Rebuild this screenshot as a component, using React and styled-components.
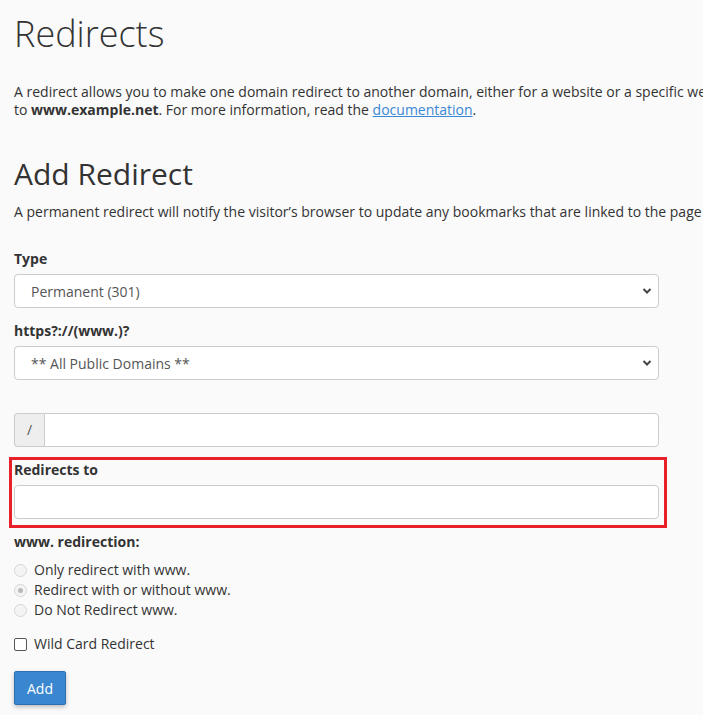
import styled, { createGlobalStyle } from "styled-components";

const GlobalStyle = createGlobalStyle`
  html, body {
    margin: 0;
    padding: 0;
    overflow: hidden;
    background: #fafafa;
  }
  body {
    font-family: "Open Sans", "Liberation Sans", sans-serif;
    font-size: 14px;
    line-height: 20px;
    color: #333;
  }
`;

const Page = styled.div`
  padding: 0 14px;
  width: 645px;
`;

const Title = styled.h1`
  margin: 12px 0 0;
  font-size: 36px;
  font-weight: 300;
  line-height: 44px;
`;

const Intro = styled.p`
  margin: 27px 0 0;
  white-space: nowrap;
  font-size: 14px;
  line-height: 18px;

  a {
    color: #3a87d4;
  }
`;

const SubTitle = styled.h2`
  margin: 36px 0 9px;
  font-size: 30px;
  font-weight: 400;
  line-height: 38px;
`;

const Lead = styled.p`
  margin: 0;
  white-space: nowrap;
  line-height: 20px;
`;

const Form = styled.form`
  margin-top: 27px;
`;

const Group = styled.div`
  position: relative;
  margin-bottom: ${(p) => p.$gap || 13}px;
`;

const Label = styled.label`
  display: block;
  font-weight: 700;
  margin-bottom: 5px;
`;

const SelectWrap = styled.div`
  position: relative;

  svg {
    position: absolute;
    right: 7px;
    top: 13px;
    pointer-events: none;
  }
`;

const Select = styled.select`
  appearance: none;
  width: 100%;
  height: 34px;
  box-sizing: border-box;
  padding: 0 16px;
  border: 1px solid #ccc;
  border-radius: 4px;
  background: #fff;
  font-family: inherit;
  font-size: 14px;
  color: #555;
`;

const Input = styled.input`
  display: block;
  width: 100%;
  height: 34px;
  box-sizing: border-box;
  padding: 6px 12px;
  border: 1px solid #ccc;
  border-radius: ${(p) => (p.$joined ? "0 4px 4px 0" : "4px")};
  background: #fff;
  font-family: inherit;
  font-size: 14px;
  color: #555;
  outline: none;
`;

const InputGroup = styled.div`
  display: flex;
`;

const Addon = styled.span`
  flex: 0 0 auto;
  width: 30px;
  height: 34px;
  box-sizing: border-box;
  display: flex;
  align-items: center;
  justify-content: center;
  background: #eee;
  border: 1px solid #ccc;
  border-right: none;
  border-radius: 4px 0 0 4px;
  color: #555;
  font-size: 14px;
`;

const Highlight = styled.div`
  position: absolute;
  left: -5px;
  right: -8px;
  top: -3px;
  bottom: -9px;
  border: 3px solid #e8202a;
  pointer-events: none;
`;

const RadioList = styled.div`
  margin-top: 8px;
`;

const Option = styled.label`
  display: flex;
  align-items: center;
  gap: 7px;
  height: 20px;
  color: #333;
`;

const Radio = styled.span`
  width: 11px;
  height: 11px;
  border-radius: 50%;
  border: 1px solid #d6d6d6;
  background: #f4f4f4;
  display: flex;
  align-items: center;
  justify-content: center;

  &::after {
    content: "";
    width: 5px;
    height: 5px;
    border-radius: 50%;
    background: ${(p) => (p.$checked ? "#b8b8b8" : "transparent")};
  }
`;

const Check = styled.span`
  width: 11px;
  height: 11px;
  border: 1px solid #555;
  border-radius: 2px;
  background: #fff;
`;

const CheckRow = styled(Option)`
  margin-top: 14px;
`;

const Button = styled.button`
  margin-top: 17px;
  width: 52px;
  height: 34px;
  border: 1px solid #2c6fb3;
  border-radius: 2px;
  background: #3a87d0;
  color: #fff;
  font-family: inherit;
  font-size: 14px;
  box-shadow: 0 2px 4px rgba(0, 0, 0, 0.25);
  cursor: pointer;
`;

function Chevron() {
  return (
    <svg width="10" height="8" viewBox="0 0 10 8">
      <path d="M1.5 2 L5 5.5 L8.5 2" fill="none" stroke="#444" strokeWidth="2" />
    </svg>
  );
}

export default function App() {
  return (
    <>
      <GlobalStyle />
      <Page>
        <Title>Redirects</Title>
        <Intro>
          A redirect allows you to make one domain redirect to another domain, either for a website or a specific web page. For example, create a redirect so that www.example.com automatically redirects users
          <br />
          to <b>www.example.net</b>. For more information, read the <a href="#doc">documentation</a>.
        </Intro>

        <SubTitle>Add Redirect</SubTitle>
        <Lead>
          A permanent redirect will notify the visitor’s browser to update any bookmarks that are linked to the page that is being redirected.
        </Lead>

        <Form onSubmit={(e) => e.preventDefault()}>
          <Group>
            <Label htmlFor="type">Type</Label>
            <SelectWrap>
              <Select id="type" defaultValue="301">
                <option value="301">Permanent (301)</option>
                <option value="302">Temporary (302)</option>
              </Select>
              <Chevron />
            </SelectWrap>
          </Group>

          <Group $gap={33}>
            <Label htmlFor="domain">https?://(www.)?</Label>
            <SelectWrap>
              <Select id="domain" defaultValue="all">
                <option value="all">** All Public Domains **</option>
              </Select>
              <Chevron />
            </SelectWrap>
          </Group>

          <Group>
            <InputGroup>
              <Addon>/</Addon>
              <Input type="text" $joined />
            </InputGroup>
          </Group>

          <Group>
            <Label htmlFor="target">Redirects to</Label>
            <Input id="target" type="text" />
            <Highlight />
          </Group>

          <Group>
            <Label>www. redirection:</Label>
            <RadioList>
              <Option>
                <Radio />
                Only redirect with www.
              </Option>
              <Option>
                <Radio $checked />
                Redirect with or without www.
              </Option>
              <Option>
                <Radio />
                Do Not Redirect www.
              </Option>
            </RadioList>
            <CheckRow>
              <Check />
              Wild Card Redirect
            </CheckRow>
            <Button type="submit">Add</Button>
          </Group>
        </Form>
      </Page>
    </>
  );
}
